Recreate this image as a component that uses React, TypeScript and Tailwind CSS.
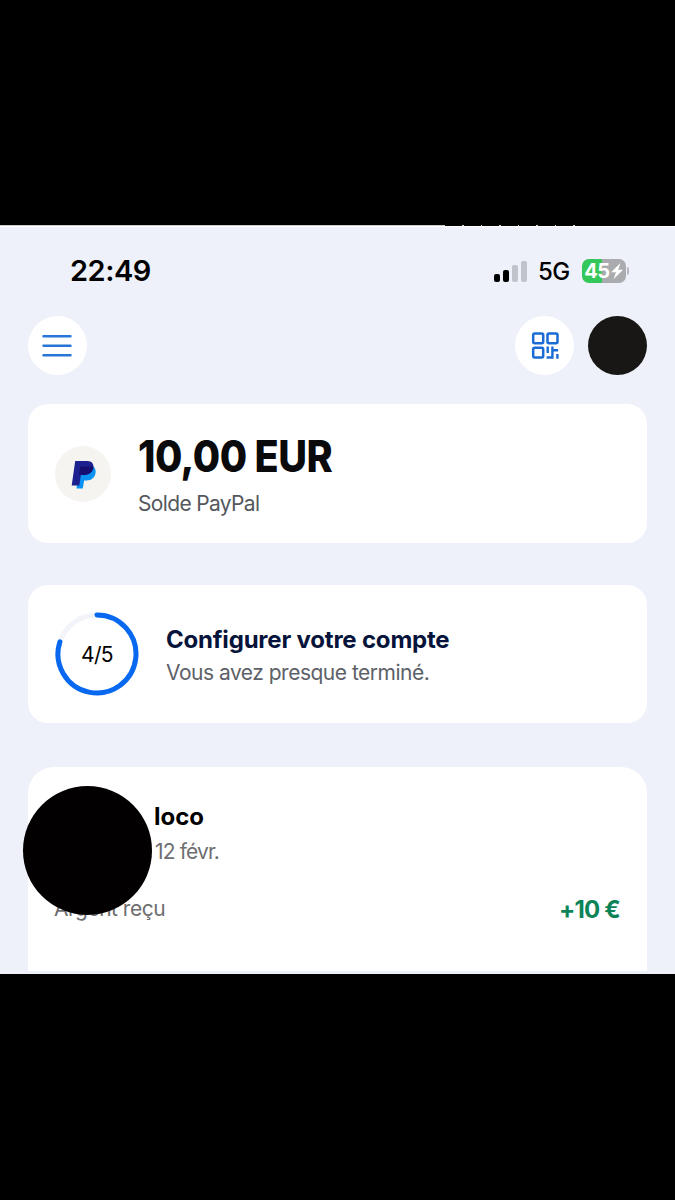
const bars = [
  "h-[8px] bg-black",
  "h-[12px] bg-black",
  "h-[17px] bg-[#c0c3cc]",
  "h-[21px] bg-[#c0c3cc]",
];

const QrIcon = () => (
  <svg viewBox="0 0 28 28" className="size-7" fill="none" stroke="#1a6bd6" strokeWidth="2.5">
    <rect x="2.2" y="1.5" width="10" height="9.8" rx="1.5" />
    <rect x="16.5" y="1.5" width="10" height="9.8" rx="1.5" />
    <rect x="2.2" y="15.7" width="10" height="9.8" rx="1.5" />
    <path d="M16.7 14.5v6.5M15.6 25.5h5.8v-11M21.5 18.3h5.6M26.4 22v4.8" strokeWidth="2.4" />
  </svg>
);

const PayPalIcon = () => (
  <svg viewBox="0 0 56 56" className="size-14">
    <path
      d="M23 20h12.1c4.4 0 6.2 3.2 5.4 7.2-.8 4.7-4.4 7.2-8.8 7.2h-2.6l-1.3 8.2h-6.2z"
      fill="#0a93f2"
    />
    <path
      d="M20.2 15h12.2c4.3 0 6.6 2.9 6 6.6-.8 4.8-4.500 7.300-9 7.300h-3.500l-1.600 10.700h-7.600z"
      fill="#1d2190"
    />
    <path
      d="M25.3 20.5h13c.2.4.2.8.1 1.1-.8 4.8-4.5 7.3-9 7.3h-5.5z"
      fill="#15106f"
    />
  </svg>
);

const StatusBar = () => (
  <div className="flex h-[90px] items-center justify-between pl-[70px] pr-[46px]">
    <p className="text-[29px] leading-[30px] font-semibold tracking-[-0.5px] text-black">22:49</p>
    <div className="flex items-center">
      <div className="mr-[2px] flex items-end gap-[3px]">
        {bars.map((bar, index) => (
          <div key={index} className={`w-1.5 rounded-[2px] ${bar}`} />
        ))}
      </div>
      <p className="mt-[2px] ml-[9px] w-[33px] text-[24px] leading-[30px] font-medium tracking-[-0.5px] text-black">
        5G
      </p>
      <div className="ml-[11px] flex h-6 w-[44px] items-center justify-center rounded-[7px] bg-linear-to-r from-[#34c759] from-46% to-[#a9abae] to-46%">
        <p className="text-[20px] leading-6 font-bold tracking-[-0.3px] text-white">45</p>
        <svg viewBox="0 0 12 18" className="h-[18px] w-3.5" fill="#fff">
          <path d="M9.5 1 0 10.200h5L2.500 17.200 12 7.700H7.200z" />
        </svg>
      </div>
      <div className="ml-px h-2 w-[2px] rounded-r-full bg-[#b5b7bc]" />
    </div>
  </div>
);

const App = () => {
  return (
    <div className="min-h-[1200px] w-[675px] overflow-hidden bg-black pt-[225px] font-['Inter',sans-serif]">
      <div className="flex h-px">
        <div className="w-[445px] bg-[#c9c9cc]" />
        {[1, 2, 3, 4, 5, 6, 7].map((tick) => (
          <div key={tick} className="ml-[17px] w-[1.5px] bg-[#d0d0d4]" />
        ))}
      </div>
      <div className="h-[748px] border-t border-white bg-[#eef1f9]">
        <div className="-mt-px">
          <StatusBar />
          <div className="flex h-[59px] items-center px-7">
            <div className="flex size-[59px] items-center justify-center rounded-full bg-white">
              <svg viewBox="0 0 30 24" className="mr-px h-6 w-[30px]" stroke="#2875d8" strokeWidth="2.4" strokeLinecap="round">
                <path d="M1.5 2.3h27M1.5 11.8h27M1.5 21.3h27" />
              </svg>
            </div>
            <div className="mr-[14px] ml-auto flex size-[59px] items-center justify-center rounded-full bg-white">
              <QrIcon />
            </div>
            <div className="size-[59px] rounded-full bg-[#181715]" />
          </div>

          <div className="mx-7 mt-[29px] flex h-[139px] items-center rounded-[20px] bg-white pl-[27px]">
            <div className="rounded-full bg-[#f5f4f0]">
              <PayPalIcon />
            </div>
            <div className="ml-7">
              <h1 className="-ml-px w-fit origin-left scale-x-90 text-[44px] leading-[52px] font-extrabold tracking-[-0.6px] whitespace-nowrap text-[#0a0a0c]">
                10,00 EUR
              </h1>
              <p className="mt-[7px] -mb-[2px] -ml-px text-[21px] leading-[30px] tracking-[-0.65px] text-[#55585c]">
                Solde PayPal
              </p>
            </div>
          </div>

          <div className="mx-7 mt-[42px] flex h-[138px] items-center rounded-[20px] bg-white pl-[27px]">
            <div className="relative size-[84px]">
              <svg viewBox="0 0 84 84" className="size-[84px]" fill="none" strokeWidth="5">
                <circle cx="42" cy="42" r="39" stroke="#f2f4fa" />
                <path
                  d="M42 3A39 39 0 1 1 4.9 29.9"
                  stroke="#0869f0"
                  strokeLinecap="round"
                />
              </svg>
              <p className="absolute inset-0 text-center text-[21px] leading-[85px] tracking-[-0.6px] text-black">
                4/5
              </p>
            </div>
            <div className="mt-1 ml-[27px]">
              <h2 className="text-[24px] leading-[34px] font-bold tracking-[-0.2px] text-[#06133a]">
                Configurer votre compte
              </h2>
              <p className="text-[21px] leading-[32px] tracking-[-0.5px] text-[#5d6168]">
                Vous avez presque terminé.
              </p>
            </div>
          </div>

          <div className="relative mx-7 mt-11 h-[204px] rounded-t-[26px] bg-white pt-[34px] pr-[27px] pl-[26px]">
            <div className="ml-[100px]">
              <p className="text-[24px] leading-8 font-bold text-black">loco</p>
              <p className="mt-1 ml-px text-[21px] leading-[30px] tracking-[-0.85px] text-[#6e6e70]">
                12 févr.
              </p>
            </div>
            <div className="mt-[27px] flex items-center justify-between">
              <p className="-mt-[2px] text-[21px] leading-8 tracking-[-0.5px] text-[#6e6e70]">
                Argent reçu
              </p>
              <p className="text-[24px] leading-8 font-bold tracking-[-0.8px] text-[#0d8458]">
                +10 €
              </p>
            </div>
            <div className="absolute top-[19px] -left-[5px] size-[129px] rounded-full bg-[#030001]" />
          </div>
        </div>
      </div>
    </div>
  );
};

export default App;
